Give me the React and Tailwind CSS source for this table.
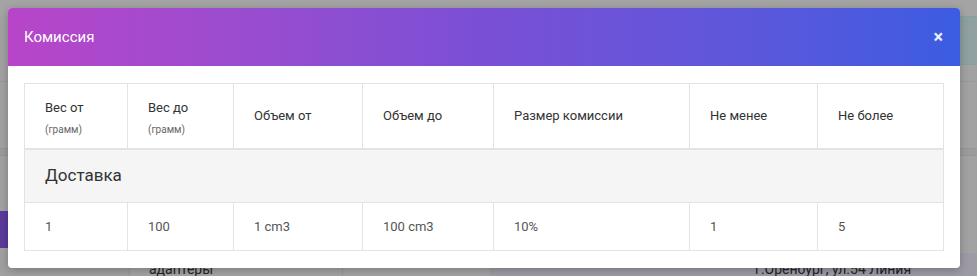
import React from 'react';

const columns = [
  { title: 'Вес от', sub: '(грамм)', width: 'w-[103px]' },
  { title: 'Вес до', sub: '(грамм)', width: 'w-[106px]' },
  { title: 'Объем от', width: 'w-[129px]' },
  { title: 'Объем до', width: 'w-[131px]' },
  { title: 'Размер комиссии', width: 'w-[196px]' },
  { title: 'Не менее', width: 'w-[128px]' },
  { title: 'Не более', width: 'w-[126px]' },
];

const row = ['1', '100', '1 cm3', '100 cm3', '10%', '1', '5'];

const App = () => {
  return (
    <div className="relative w-[977px] h-[276px] overflow-hidden bg-[#a2a2a2] font-['Roboto',sans-serif]">
      {/* dimmed page behind the modal */}
      <div className="flex flex-col h-full">
        <div className="h-[16px] bg-[#a4a4a4]" />
        <div className="flex h-[50px]">
          <div className="flex-1 bg-[#a2a2a2]" />
          <div className="w-[17px] bg-[#8fa1a1] border-y border-[#7fa3a3]" />
        </div>
        <div className="h-[17px] bg-[#a2a2a2] border-b border-[#999]" />
        <div className="h-[67px] bg-[#a2a2a2]" />
        <div className="h-[8px] bg-[#9c9c9c] border-y border-[#969696]" />
        <div className="h-[55px] bg-[#a2a2a2]" />
        <div className="h-[43px] bg-[#a2a2a2] flex">
          <div className="w-[8px] h-[37px] bg-[#5b3b9c]" />
        </div>
        <div className="flex-1 flex bg-[#9d9aa5] text-[14px] leading-none text-[#222] whitespace-nowrap">
          <div className="w-[130px] shrink-0 bg-[#a0a0a0] border-r border-[#959595]" />
          <div className="w-[213px] shrink-0 bg-[#a3a3a3] border-r border-[#959595] pl-[19px] pt-[9px]">адаптеры</div>
          <div className="w-[147px] shrink-0 bg-[#a3a3a3]" />
          <div className="flex-1 pl-[265px] pt-[9px]">г.Оренбург, ул.54 Линия</div>
        </div>
      </div>

      {/* modal */}
      <div className="absolute left-[8px] top-[8px] w-[952px] h-[260px] bg-white rounded-[4px] shadow-[0_2px_8px_rgba(0,0,0,0.25)] overflow-hidden">
        <div className="h-[58px] flex items-center justify-between pl-[16px] pr-[17px] bg-linear-to-r from-[#b845c9] via-[#7a4fd5] to-[#3b5ce1]">
          <h3 className="text-[15px] text-white">Комиссия</h3>
          <button className="text-white text-[18px] font-bold leading-none opacity-90">×</button>
        </div>
        <div className="pt-[17px] pl-[16px] pr-[17px]">
          <table className="table-fixed border-collapse w-[919px] text-[13px]">
            <thead>
              <tr className="h-[65px]">
                {columns.map((c) => (
                  <th key={c.title} className={`${c.width} border border-[#e3e3e3] border-b-2 px-[20px] text-left align-middle font-normal text-[#333]`}>
                    <div className={c.sub ? 'pt-[3px]' : ''}>{c.title}</div>
                    {c.sub && <div className="text-[10px] text-[#666] mt-[4px]">{c.sub}</div>}
                  </th>
                ))}
              </tr>
            </thead>
            <tbody>
              <tr className="h-[54px] bg-[#f5f5f5]">
                <td colSpan="7" className="border border-[#e3e3e3] px-[20px] text-[17px] text-[#333]">Доставка</td>
              </tr>
              <tr className="h-[48px]">
                {row.map((v, i) => (
                  <td key={i} className="border border-[#e3e3e3] px-[20px] text-[#555]">{v}</td>
                ))}
              </tr>
            </tbody>
          </table>
        </div>
      </div>
    </div>
  );
};

export default App;
